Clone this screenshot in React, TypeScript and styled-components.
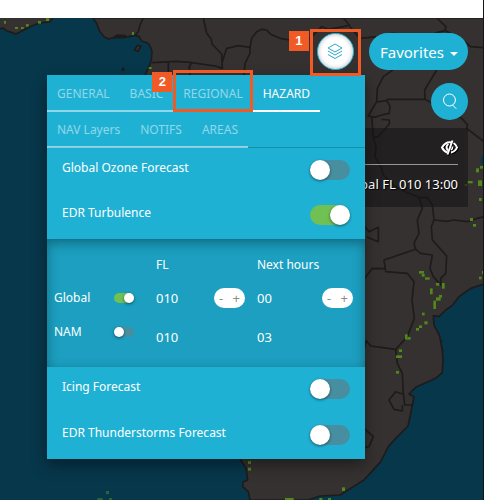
import React, { useState } from "react";
import styled, { createGlobalStyle, css } from "styled-components";

const accent = "#1fb1d4";
const marker = "#f15a24";

const GlobalStyle = createGlobalStyle`
  * { box-sizing: border-box; }
  body {
    margin: 0;
    background: #07374b;
    color: #fff;
    font-family: "Noto Sans", "Open Sans", sans-serif;
    font-size: 13px;
  }
  button, input { font: inherit; margin: 0; padding: 0; border: 0; }
  button { cursor: pointer; }
`;

const Page = styled.div`
  min-height: 100vh;
  display: flex;
  flex-direction: column;
  border-right: 1px solid #141414;
`;

const Header = styled.header`
  height: 18px;
  background: #fff;
`;

const MapArea = styled.main`
  position: relative;
  flex: 1;
  overflow: hidden;
  padding: 15px 15px 41px;
  isolation: isolate;
  box-shadow: inset 0 5px 6px -3px rgba(0, 0, 0, 0.5);
`;

const MapDrawing = styled.svg`
  position: absolute;
  inset: 0;
  width: 100%;
  height: 100%;
  z-index: -1;
`;

const Toolbar = styled.div`
  display: flex;
  justify-content: flex-end;
  gap: 15px;
`;

const Anchor = styled.div`
  position: relative;
  z-index: 2;
`;

const RoundButton = styled.button<{ $light?: boolean }>`
  width: 37px;
  height: 37px;
  display: grid;
  place-items: center;
  border-radius: 50%;
  background: ${(p) => (p.$light ? "#fff" : accent)};
  border: ${(p) => (p.$light ? `1px solid ${accent}` : "0")};
  box-shadow: ${(p) => (p.$light ? "inset 0 0 4px rgba(0, 0, 0, 0.3)" : "none")};
`;

const FavoritesButton = styled.button`
  height: 37px;
  padding: 0 10px 0 11px;
  display: flex;
  align-items: center;
  gap: 6px;
  border-radius: 19px;
  background: ${accent};
  color: #fff;
  font-size: 15px;
`;

const Caret = styled.span`
  margin-top: 4px;
  border: 4px solid transparent;
  border-top-color: #fff;
  border-bottom: 0;
`;

const SearchRow = styled.div`
  display: flex;
  justify-content: flex-end;
  padding: 13px 0 8px;
`;

const LayerInfo = styled.section`
  width: 180px;
  height: 79px;
  margin-left: auto;
  padding: 10px;
  background: rgba(22, 21, 22, 0.6);
  text-align: right;
  text-shadow: 1px 1px 1px #000;
`;

const InfoHead = styled.div`
  height: 27px;
  display: flex;
  justify-content: flex-end;
  align-items: flex-start;
  border-bottom: 1px solid #9a9798;
`;

const IconButton = styled.button`
  display: flex;
  padding-top: 2px;
  background: none;
  filter: drop-shadow(1px 1px 0 #000);
`;

const InfoText = styled.p`
  margin: 0;
  line-height: 38px;
  white-space: nowrap;
`;

const Callout = styled.span`
  position: absolute;
  border: 3px solid ${marker};
  inset: -4px -7px -6px;
  pointer-events: none;
  z-index: 3;
`;

const TabCallout = styled(Callout)`
  inset: -6px 0 -2px;
`;

const Badge = styled.span`
  position: absolute;
  right: 100%;
  top: -1px;
  margin-right: 4px;
  width: 20px;
  height: 20px;
  background: ${marker};
  color: #fff;
  font: bold 13px/20px "Liberation Sans", sans-serif;
  text-align: center;
`;

const Panel = styled.section`
  position: absolute;
  top: 42px;
  right: -11px;
  width: 318px;
  background: ${accent};
  box-shadow: 0 6px 14px rgba(0, 0, 0, 0.4);
  font-size: 12px;
`;

const Tabs = styled.nav`
  display: flex;
  flex-wrap: wrap;
  padding-top: 1px;
  box-shadow: inset 0 -1px #168fae;
`;

const Tab = styled.button<{ $active?: boolean }>`
  position: relative;
  height: 36px;
  padding: 0 10px;
  background: none;
  color: ${(p) => (p.$active ? "#fff" : "rgba(255, 255, 255, 0.5)")};
  border-bottom: 2px solid ${(p) => (p.$active ? "#fff" : "rgba(255, 255, 255, 0.5)")};
`;

const Items = styled.div<{ $row: number }>`
  display: grid;
  grid-auto-rows: ${(p) => p.$row}px;
`;

const Item = styled.label`
  display: flex;
  justify-content: space-between;
  align-items: flex-start;
  padding: 12px 15px 0;
  line-height: 16px;
`;

const Switch = styled.input.attrs({ type: "checkbox" })<{ $small?: boolean }>`
  appearance: none;
  display: block;
  flex: none;
  cursor: pointer;
  border-radius: 10px;
  background: #478fa0;
  ${(p) => {
    const size = p.$small ? 10 : 20;
    return css`
      width: ${size * 2}px;
      height: ${size}px;
      &::before {
        content: "";
        display: block;
        width: ${size}px;
        height: ${size}px;
        border-radius: 50%;
        background: #fff;
        box-shadow: 0 1px 3px rgba(0, 0, 0, 0.5);
      }
      &:checked::before { margin-left: ${size}px; }
    `;
  }}
  &:checked { background: #70c053; }
`;

const Details = styled.div`
  margin-top: 1px;
  height: 128px;
  padding: 8px 7px;
  background: #1c9fc0;
  box-shadow: inset 0 4px 12px rgba(0, 40, 50, 0.45);
`;

const DetailTable = styled.table`
  width: 100%;
  table-layout: fixed;
  border-collapse: collapse;
  text-align: left;
`;

const Row = styled.tr<{ $tall?: boolean }>`
  height: ${(p) => (p.$tall ? 44 : 34)}px;
`;

const Cell = styled.td<{ $top?: boolean }>`
  padding: 0;
  vertical-align: ${(p) => (p.$top ? "top" : "middle")};
  line-height: 34px;
`;

const NumberCell = styled(Cell)`
  font-size: 13px;
`;

const HeadCell = styled.th<{ $width?: number }>`
  padding: 0;
  width: ${(p) => (p.$width ? `${p.$width}px` : "auto")};
  font-weight: 400;
`;

const SwitchBox = styled.div`
  height: 34px;
  display: flex;
  align-items: center;
`;

const Value = styled.div<{ $end: number }>`
  display: flex;
  align-items: center;
  justify-content: space-between;
  padding-right: ${(p) => p.$end}px;
`;

const Stepper = styled.span`
  width: 31px;
  height: 20px;
  display: flex;
  justify-content: space-between;
  padding: 0 5px;
  border-radius: 10px;
  background: #fff;
`;

const StepButton = styled.button`
  background: none;
  color: #8b8b8b;
  line-height: 20px;
`;

const coast =
  "M278 54 290 70 298 92 312 110 325 117 345 112 365 112 385 110 405 106 418 110 424 123 445 130 452 142 456 155 454 180 446 203 436 222 520 500 640 800 700 1200 720 1377 738 1405 743 1440 729 1446 728 1460 745 1475 750 1500 925 1500 960 1488 1020 1485 1060 1460 1092 1440 1142 1385 1165 1340 1187 1315 1224 1278 1232 1240 1242 1190 1227 1182 1247 1162 1307 1135 1327 1118 1329 1085 1327 1050 1318 1005 1312 995 1302 975 1300 947 1317 950 1337 930 1357 916 1377 890 1412 865 1460 850 1460 54Z";

const borders = [
  "M430 54 420 75 415 95 405 106",
  "M610 54 614 72 620 100 634 118 636 132 665 162 667 205 645 198 625 195 570 187 530 184 455 188",
  "M667 185 680 145 715 137 750 142 755 115 770 95 785 88 800 90 812 103 840 115 870 120 930 115 965 80 985 88 1030 80 1048 75 1030 54",
  "M750 140 750 160 735 190 732 225M505 187V225M575 187 568 200 570 225",
  "M1048 78 1080 115 1135 110 1180 100 1265 116 1310 98 1335 92 1338 80 1310 54M1338 92 1400 130 1412 140 1452 143",
  "M1205 180 1185 205 1150 230 1132 265 1130 305 1115 330 1105 348 1125 352 1145 345 1168 340 1170 318 1160 302 1130 306",
  "M1160 298H1275L1274 270 1310 210 1330 190M1275 298 1360 345 1385 355 1403 375 1400 385 1452 425",
  "M1115 352 1120 412 1135 410 1168 372 1168 360 1145 358M1120 412 1128 440 1125 470 1145 505 1150 525 1180 555 1215 575 1257 592 1282 593 1297 615 1302 660 1294 680 1297 720 1320 745 1340 768 1337 820 1322 835 1322 855 1300 830 1290 805 1297 765 1262 760 1247 748 1152 780 1157 815 1222 820 1242 845 1236 900 1243 955 1222 1010 1187 1048 1142 1042 1112 1038 1098 1022 1092 1050",
  "M1247 748 1242 730 1257 700 1252 660 1267 625 1257 592M1302 660 1340 664 1362 660 1402 665 1432 655 1452 650",
  "M1095 680 1107 695 1135 682V725L1122 720 1100 710M1092 838 1117 805 1157 806",
  "M1187 1048 1192 1090 1207 1120 1210 1180 1214 1215H1240M1210 1183 1187 1175 1167 1200 1182 1228 1207 1233V1215",
  "M1092 1285 1120 1310 1107 1340 1092 1343",
];

const cells: [number, number, number, number][] = [
  [12, 63, 6, 8], [45, 81, 9, 6], [63, 81, 8, 6], [78, 72, 8, 8], [114, 63, 9, 8], [138, 55, 9, 8],
  [396, 96, 6, 9], [446, 201, 9, 6],
  [1440, 498, 9, 8], [1428, 505, 9, 12], [1402, 543, 16, 7], [1394, 552, 8, 6], [1434, 541, 12, 17], [1437, 594, 8, 9],
  [1410, 654, 9, 9], [1419, 672, 9, 8], [1446, 813, 6, 9], [1437, 830, 8, 8],
  [1257, 813, 15, 8], [1265, 822, 9, 8], [1275, 832, 14, 7], [1308, 849, 10, 8], [1326, 849, 8, 17],
  [1290, 865, 8, 18], [1317, 885, 9, 8], [1308, 892, 14, 10], [1300, 902, 8, 25],
  [1266, 938, 8, 8], [1273, 964, 10, 9], [1257, 976, 9, 8], [1248, 984, 9, 8],
  [1215, 1003, 8, 16], [1223, 1011, 9, 8], [1197, 1048, 9, 8], [1188, 1066, 18, 8], [1188, 1113, 9, 8],
  [744, 1383, 9, 9], [744, 1403, 9, 9], [1026, 1462, 9, 11], [855, 1494, 26, 6], [958, 1494, 9, 6], [984, 1494, 9, 6],
  [318, 1473, 9, 9], [292, 1494, 16, 6], [327, 1494, 9, 6],
];

function AfricaMap() {
  return (
    <MapDrawing viewBox="0 54 1452 1446" preserveAspectRatio="xMinYMin slice" aria-hidden="true">
      <rect y="54" width="1452" height="1446" fill="#07374b" />
      <g fill="#353130" stroke="#1e1b1b" strokeWidth="5" strokeLinejoin="round">
        <path d="M-6 88 8 84 20 92 48 102 90 80 118 69 150 66 160 50H-6Z" />
        <path d={coast} />
        <path d="M404 150 412 136 423 138 414 154Z" />
        <circle cx="369" cy="208" r="3" />
        <path d="M343 112 352 105 376 107 373 113Z" fill="#1e1b1b" />
        <path d="M1325 1020v5M1325 1042l3 10" />
      </g>
      <path d="M1455 455 1444 470 1441 488 1455 495Z" fill="#07374b" />
      <g fill="none" stroke="#1e1b1b" strokeWidth="5" strokeLinejoin="round">
        {borders.map((d) => (
          <path key={d} d={d} />
        ))}
      </g>
      {cells.map(([x, y, w, h]) => (
        <rect key={`${x}-${y}`} x={x} y={y} width={w} height={h} fill="#55911a" opacity={x < 340 && y > 1400 ? 0.5 : 0.9} />
      ))}
    </MapDrawing>
  );
}

const LayersIcon = () => (
  <svg width="16" height="17" viewBox="0 0 16 17" fill="none" stroke="#2fa9cb" strokeLinejoin="round" aria-hidden="true">
    <path d="M8 1 15 5 8 9 1 5ZM1 8l7 4 7-4M1 11.500l7 4 7-4" />
  </svg>
);

const SearchIcon = () => (
  <svg width="16" height="17" viewBox="0 0 16 17" fill="none" stroke="#fff" strokeLinecap="round" aria-hidden="true">
    <circle cx="7.500" cy="7" r="6" />
    <path d="M10.500 12 14 15.500" />
  </svg>
);

const EyeOffIcon = () => (
  <svg width="17" height="15" viewBox="0 0 17 15" fill="none" stroke="#fff" aria-hidden="true">
    <path d="M11 2.500C6.500 1.500 3 4 1 7.500c1.200 2.500 3 4.200 5.500 5" strokeWidth="2" />
    <path d="M7.500 4C5 5.500 5 8.500 7 10.500" strokeWidth="2" />
    <path d="M11.500.5 6.500 14.500" strokeWidth="2" />
    <path d="M12.500 3c1.800 1 3 2.500 3.500 4.500-1 2.500-3 4.200-6 5" strokeWidth="2" />
    <path d="M11.500 6.500c.3 1.500-.2 2.500-1.500 3.500" strokeWidth="1.500" />
  </svg>
);

const tabNames = ["GENERAL", "BASIC", "REGIONAL", "HAZARD", "NAV Layers", "NOTIFS", "AREAS"];

function LayerItem({ label, on }: { label: string; on?: boolean }) {
  return (
    <Item>
      {label}
      <Switch defaultChecked={on} />
    </Item>
  );
}

function StepperControl({ label }: { label: string }) {
  return (
    <Stepper>
      <StepButton aria-label={`Decrease ${label}`}>-</StepButton>
      <StepButton aria-label={`Increase ${label}`}>+</StepButton>
    </Stepper>
  );
}

function TurbulenceDetails() {
  return (
    <Details>
      <DetailTable>
        <thead>
          <Row>
            <HeadCell $width={60} />
            <HeadCell $width={42} />
            <HeadCell scope="col">FL</HeadCell>
            <HeadCell scope="col">Next hours</HeadCell>
          </Row>
        </thead>
        <tbody>
          <Row>
            <Cell><label htmlFor="global">Global</label></Cell>
            <Cell><SwitchBox><Switch $small id="global" defaultChecked /></SwitchBox></Cell>
            <NumberCell><Value $end={12}>010<StepperControl label="flight level" /></Value></NumberCell>
            <NumberCell><Value $end={5}>00<StepperControl label="hours" /></Value></NumberCell>
          </Row>
          <Row $tall>
            <Cell $top><label htmlFor="nam">NAM</label></Cell>
            <Cell $top><SwitchBox><Switch $small id="nam" /></SwitchBox></Cell>
            <NumberCell>010</NumberCell>
            <NumberCell>03</NumberCell>
          </Row>
        </tbody>
      </DetailTable>
    </Details>
  );
}

function LayerPanel() {
  const [active, setActive] = useState("HAZARD");
  return (
    <Panel>
      <Tabs>
        {tabNames.map((name) => (
          <Tab key={name} $active={name === active} onClick={() => setActive(name)}>
            {name}
            {name === "REGIONAL" && (
              <TabCallout><Badge>2</Badge></TabCallout>
            )}
          </Tab>
        ))}
      </Tabs>
      <Items $row={45}>
        <LayerItem label="Global Ozone Forecast" />
        <LayerItem label="EDR Turbulence" on />
      </Items>
      <TurbulenceDetails />
      <Items $row={46}>
        <LayerItem label="Icing Forecast" />
        <LayerItem label="EDR Thunderstorms Forecast" />
      </Items>
    </Panel>
  );
}

export default function App() {
  return (
    <Page>
      <GlobalStyle />
      <Header />
      <MapArea>
        <AfricaMap />
        <Toolbar>
          <Anchor>
            <RoundButton $light aria-label="Layers"><LayersIcon /></RoundButton>
            <LayerPanel />
            <Callout><Badge>1</Badge></Callout>
          </Anchor>
          <FavoritesButton>Favorites<Caret /></FavoritesButton>
        </Toolbar>
        <SearchRow>
          <RoundButton aria-label="Search"><SearchIcon /></RoundButton>
        </SearchRow>
        <LayerInfo>
          <InfoHead>
            <IconButton aria-label="Hide layer"><EyeOffIcon /></IconButton>
          </InfoHead>
          <InfoText>Global FL 010 13:00</InfoText>
        </LayerInfo>
      </MapArea>
    </Page>
  );
}
